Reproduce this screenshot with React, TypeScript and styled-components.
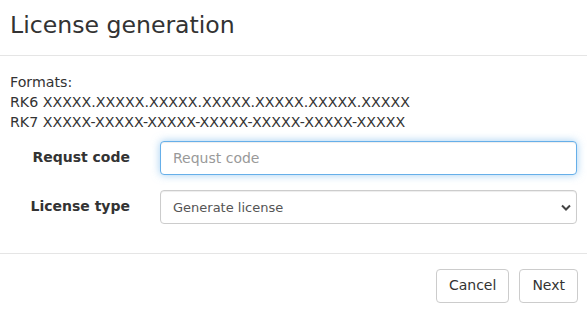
import styled, { createGlobalStyle } from "styled-components";

const GlobalStyle = createGlobalStyle`
  html, body {
    margin: 0;
    padding: 0;
    background: #ffffff;
  }
  body {
    font-family: "DejaVu Sans", Verdana, sans-serif;
    font-size: 14px;
    line-height: 1.42857;
    color: #333333;
  }
  * {
    box-sizing: border-box;
  }
`;

const Modal = styled.div`
  width: 587px;
  height: 315px;
  display: flex;
  flex-direction: column;
  background: #ffffff;
`;

const Header = styled.div`
  height: 56px;
  display: flex;
  align-items: center;
  padding: 0 10px 3px;
  border-bottom: 1px solid #e5e5e5;
`;

const Title = styled.h4`
  margin: 0;
  font-size: 23.6px;
  font-weight: normal;
  line-height: 1.1;
  color: #333333;
`;

const Body = styled.div`
  padding: 16px 10px 0;
  height: 198px;
  border-bottom: 1px solid #e5e5e5;
`;

const FormatLine = styled.div`
  font-size: 14.2px;
  line-height: 20px;
  color: #333333;
`;

const Form = styled.form`
  margin-top: 9px;
  display: flex;
  flex-direction: column;
  gap: 15px;
`;

const Row = styled.div`
  display: grid;
  grid-template-columns: 120px 1fr;
  column-gap: 30px;
  align-items: center;
`;

const Label = styled.label`
  text-align: right;
  font-weight: bold;
  color: #333333;
`;

const Input = styled.input`
  height: 34px;
  width: 100%;
  padding: 6px 12px;
  font: inherit;
  color: #555555;
  border: 1px solid #66afe9;
  border-radius: 4px;
  outline: none;
  box-shadow: inset 0 1px 1px rgba(0, 0, 0, 0.075), 0 0 8px rgba(102, 175, 233, 0.6);
  &::placeholder {
    color: #999999;
  }
`;

const SelectWrap = styled.div`
  position: relative;
  height: 34px;
`;

const Select = styled.select`
  appearance: none;
  width: 100%;
  height: 34px;
  padding: 6px 12px;
  font-family: inherit;
  font-size: 13px;
  color: #555555;
  background: #ffffff;
  border: 1px solid #cccccc;
  border-radius: 4px;
  box-shadow: inset 0 1px 1px rgba(0, 0, 0, 0.075);
  outline: none;
`;

const Chevron = styled.svg`
  position: absolute;
  right: 6px;
  top: 14px;
  pointer-events: none;
`;

const Footer = styled.div`
  display: flex;
  justify-content: flex-end;
  gap: 10px;
  padding: 15px 9px 0 10px;
`;

const Button = styled.button`
  height: 34px;
  padding: 6px 12px;
  font: inherit;
  color: #333333;
  background: #ffffff;
  border: 1px solid #cccccc;
  border-radius: 4px;
  cursor: pointer;
`;

export default function App() {
  return (
    <>
      <GlobalStyle />
      <Modal>
        <Header>
          <Title>License generation</Title>
        </Header>
        <Body>
          <FormatLine>Formats:</FormatLine>
          <FormatLine>RK6 XXXXX.XXXXX.XXXXX.XXXXX.XXXXX.XXXXX.XXXXX</FormatLine>
          <FormatLine>RK7 XXXXX-XXXXX-XXXXX-XXXXX-XXXXX-XXXXX-XXXXX</FormatLine>
          <Form onSubmit={(e) => e.preventDefault()}>
            <Row>
              <Label htmlFor="code">Requst code</Label>
              <Input id="code" placeholder="Requst code" />
            </Row>
            <Row>
              <Label htmlFor="type">License type</Label>
              <SelectWrap>
                <Select id="type" defaultValue="generate">
                  <option value="generate">Generate license</option>
                </Select>
                <Chevron width="10" height="7" viewBox="0 0 10 7">
                  <path d="M1 1.5 L5 5.5 L9 1.5" fill="none" stroke="#444" strokeWidth="2" />
                </Chevron>
              </SelectWrap>
            </Row>
          </Form>
        </Body>
        <Footer>
          <Button type="button">Cancel</Button>
          <Button type="button">Next</Button>
        </Footer>
      </Modal>
    </>
  );
}
